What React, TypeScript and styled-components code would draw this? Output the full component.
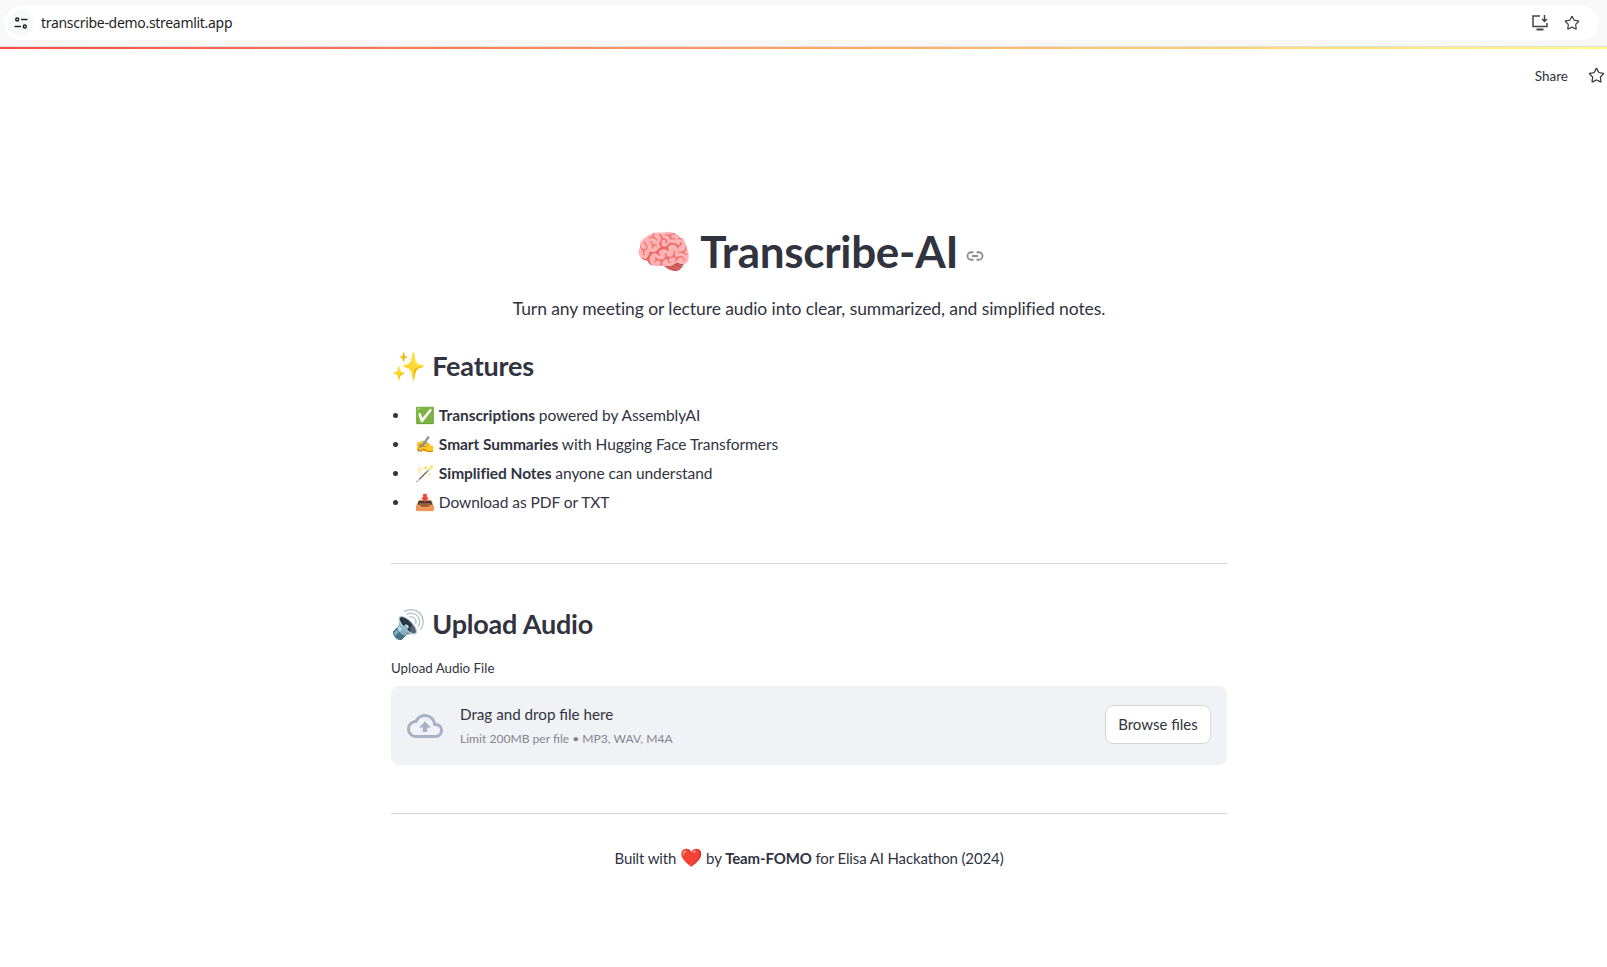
import { createGlobalStyle, styled } from "styled-components";
import { Star } from "lucide-react";

const GlobalStyle = createGlobalStyle`
  html, body {
    margin: 0;
    padding: 0;
    background: #fff;
    overflow: hidden;
  }
  body {
    font-family: "Lato", "Noto Sans", "Noto Color Emoji", sans-serif;
    color: rgb(49, 51, 63);
  }
`;

const App = () => {
  return (
    <Page>
      <GlobalStyle />
      <BrowserBar>
        <Address>
          <SiteIcon>
            <svg width="14" height="14" viewBox="0 0 14 14" fill="none" stroke="#1f1f1f" strokeWidth="1.4">
              <circle cx="3.2" cy="3.5" r="1.5" />
              <path d="M7 3.5h6.5" />
              <circle cx="10.8" cy="10.5" r="1.5" />
              <path d="M0.5 10.5h6.5" />
            </svg>
          </SiteIcon>
          <Url>transcribe-demo.streamlit.app</Url>
          <BarIcons>
            <svg width="18" height="18" viewBox="0 0 18 18" fill="none" stroke="#444" strokeWidth="1.5">
              <path d="M9 2H2v10.5h14V9" />
              <path d="M5.5 15.5h7" strokeWidth="2" />
              <path d="M13.5 1v6M11 5l2.5 2.5L16 5" />
            </svg>
            <Star size={16} color="#444" strokeWidth={1.8} />
          </BarIcons>
        </Address>
      </BrowserBar>
      <Decoration />
      <Toolbar>
        <ShareLabel>Share</ShareLabel>
        <Star size={17} color="#31333f" strokeWidth={1.7} />
      </Toolbar>
      <Main>
        <Title>
          <TitleEmoji $size={46}>🧠</TitleEmoji> Transcribe-AI
          <LinkIcon width="18" height="18" viewBox="0 0 24 24" fill="none" stroke="#8b8c93" strokeWidth="2.4">
            <path d="M10 7H7a5 5 0 0 0 0 10h3M14 7h3a5 5 0 0 1 0 10h-3M8 12h8" />
          </LinkIcon>
        </Title>
        <Tagline>Turn any meeting or lecture audio into clear, summarized, and simplified notes.</Tagline>
        <SectionHeading $top={23}>
          <Emoji $size={28}>✨</Emoji> Features
        </SectionHeading>
        <FeatureList>
          <li><Emoji $size={16}>✅</Emoji> <b>Transcriptions</b> powered by AssemblyAI</li>
          <li><Emoji $size={16}>✍️</Emoji> <b>Smart Summaries</b> with Hugging Face Transformers</li>
          <li><Emoji $size={16}>🪄</Emoji> <b>Simplified Notes</b> anyone can understand</li>
          <li><Emoji $size={16}>📥</Emoji> Download as PDF or TXT</li>
        </FeatureList>
        <Rule $top={46} />
        <SectionHeading $top={40}>
          <Emoji $size={28}>🔊</Emoji> Upload Audio
        </SectionHeading>
        <UploadLabel>Upload Audio File</UploadLabel>
        <Dropzone>
          <DropInfo>
            <svg width="36" height="36" viewBox="0 0 24 24" fill="#a6b0c6">
              <path d="M19.35 10.04A7.49 7.49 0 0 0 12 4C9.11 4 6.6 5.64 5.35 8.04A5.994 5.994 0 0 0 0 14c0 3.31 2.69 6 6 6h13c2.76 0 5-2.24 5-5 0-2.64-2.05-4.78-4.65-4.96zM19 18H6c-2.21 0-4-1.79-4-4 0-2.05 1.53-3.76 3.56-3.97l1.07-.11.5-.95A5.469 5.469 0 0 1 12 6c2.62 0 4.88 1.86 5.39 4.43l.3 1.5 1.53.11A2.98 2.98 0 0 1 22 15c0 1.65-1.35 3-3 3zM8 13h2.55v3h2.9v-3H16l-4-4z" />
            </svg>
            <DropText>
              <DropTitle>Drag and drop file here</DropTitle>
              <DropLimit>Limit 200MB per file • MP3, WAV, M4A</DropLimit>
            </DropText>
          </DropInfo>
          <BrowseButton>Browse files</BrowseButton>
        </Dropzone>
        <Rule $top={48} />
        <Footer>
          Built with <Emoji $size={18}>❤️</Emoji> by <b>Team-FOMO</b> for Elisa AI Hackathon (2024)
        </Footer>
      </Main>
    </Page>
  );
};

export default App;

const Page = styled.div`
  width: 1607px;
  height: 967px;
  overflow: hidden;
`;

const BrowserBar = styled.div`
  height: 47px;
  background: #f8f8f8;
  border-bottom: 1px solid #e0e0e0;
  padding: 6px 8px 6px 4px;
  box-sizing: border-box;
`;

const Address = styled.div`
  height: 34px;
  background: #fff;
  border-radius: 17px;
  display: flex;
  align-items: center;
  padding: 0 19px 0 4px;
`;

const SiteIcon = styled.div`
  width: 26px;
  height: 26px;
  border-radius: 50%;
  background: #f8f9fa;
  display: flex;
  align-items: center;
  justify-content: center;
`;

const Url = styled.div`
  font-family: "Noto Sans", sans-serif;
  font-size: 14px;
  letter-spacing: -0.3px;
  line-height: 32px;
  height: 32px;
  color: #1f1f1f;
  margin-left: 7px;
`;

const BarIcons = styled.div`
  margin-left: auto;
  display: flex;
  align-items: center;
  gap: 15px;
`;

const Decoration = styled.div`
  height: 2px;
  background: linear-gradient(90deg, rgb(255, 75, 75), rgb(255, 253, 128));
`;

const Toolbar = styled.div`
  height: 53px;
  display: flex;
  align-items: center;
  justify-content: flex-end;
  gap: 20px;
  padding-right: 2px;
`;

const ShareLabel = styled.span`
  font-size: 13.5px;
`;

const Main = styled.main`
  width: 836px;
  margin-left: 391px;
  padding-top: 118px;
`;

const Emoji = styled.span<{ $size: number }>`
  font-size: ${(p) => p.$size}px;
  letter-spacing: 0;
  line-height: 1;
`;

const TitleEmoji = styled(Emoji)`
  margin-right: -2px;
`;

const Title = styled.h1`
  font-size: 44px;
  font-weight: 700;
  letter-spacing: -0.3px;
  line-height: 62px;
  text-align: center;
  margin: 0;
  padding-left: 2px;
`;

const LinkIcon = styled.svg`
  margin-left: 8px;
  vertical-align: 3px;
`;

const Tagline = styled.p`
  font-size: 17.5px;
  letter-spacing: -0.08px;
  line-height: 29px;
  text-align: center;
  margin: 12px 0 0;
`;

const SectionHeading = styled.h2<{ $top: number }>`
  font-size: 27px;
  font-weight: 700;
  letter-spacing: -0.2px;
  line-height: 40px;
  margin: ${(p) => p.$top}px 0 0;
`;

const FeatureList = styled.ul`
  margin: 15px 0 0;
  padding-left: 19px;
  font-size: 15.5px;
  letter-spacing: -0.06px;
  line-height: 29px;

  li {
    padding-left: 5px;
  }
`;

const Rule = styled.hr<{ $top: number }>`
  border: none;
  border-top: 1px solid #d6d6d9;
  margin: ${(p) => p.$top}px 0 0;
`;

const UploadLabel = styled.div`
  font-size: 13.3px;
  line-height: 20px;
  margin-top: 14px;
`;

const Dropzone = styled.div`
  height: 79px;
  margin-top: 8px;
  background: #f0f2f6;
  border-radius: 8px;
  display: flex;
  align-items: center;
  justify-content: space-between;
  padding: 0 16px;
  box-sizing: border-box;
`;

const DropInfo = styled.div`
  display: flex;
  align-items: center;
  gap: 17px;
`;

const DropText = styled.div`
  display: flex;
  flex-direction: column;
  gap: 8px;
  margin-top: 0;
`;

const DropTitle = styled.span`
  font-size: 15.2px;
`;

const DropLimit = styled.span`
  font-size: 12.1px;
  color: #83858f;
`;

const BrowseButton = styled.button`
  width: 106px;
  height: 39px;
  margin-bottom: 3px;
  background: #fff;
  border: 1px solid #d5d6da;
  border-radius: 8px;
  font-family: inherit;
  font-size: 15px;
  color: inherit;
  padding: 0;
`;

const Footer = styled.p`
  font-size: 15px;
  letter-spacing: -0.13px;
  line-height: 24px;
  text-align: center;
  margin: 32px 0 0;
`;
